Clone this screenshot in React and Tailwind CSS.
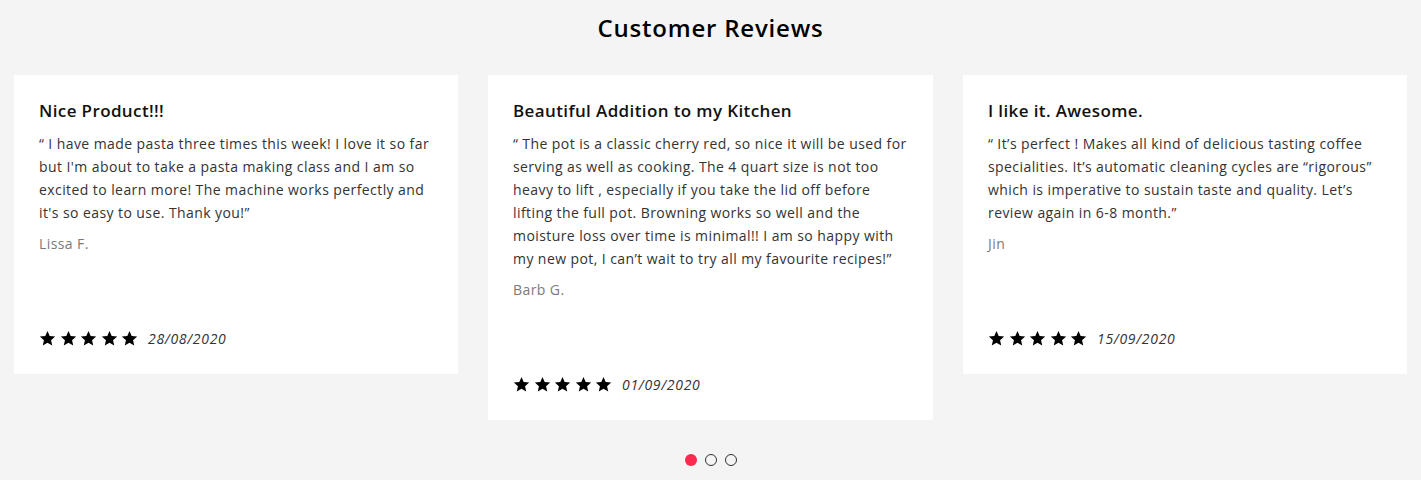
import React from "react";

const reviews = [
  {
    title: "Nice Product!!!",
    lines: [
      "\u201C I have made pasta three times this week! I love it so far",
      "but I'm about to take a pasta making class and I am so",
      "excited to learn more! The machine works perfectly and",
      "it's so easy to use. Thank you!\u201D",
    ],
    author: "Lissa F.",
    date: "28/08/2020",
    w: "w-[444px]",
  },
  {
    title: "Beautiful Addition to my Kitchen",
    lines: [
      "\u201C The pot is a classic cherry red, so nice it will be used for",
      "serving as well as cooking. The 4 quart size is not too",
      "heavy to lift , especially if you take the lid off before",
      "lifting the full pot. Browning works so well and the",
      "moisture loss over time is minimal!! I am so happy with",
      "my new pot, I can\u2019t wait to try all my favourite recipes!\u201D",
    ],
    author: "Barb G.",
    date: "01/09/2020",
    w: "w-[445px]",
  },
  {
    title: "I like it. Awesome.",
    lines: [
      "\u201C It\u2019s perfect ! Makes all kind of delicious tasting coffee",
      "specialities. It\u2019s automatic cleaning cycles are \u201Crigorous\u201D",
      "which is imperative to sustain taste and quality. Let\u2019s",
      "review again in 6-8 month.\u201D",
    ],
    author: "Jin",
    date: "15/09/2020",
    w: "w-[444px]",
  },
];

function Star() {
  return (
    <svg width="17" height="17" viewBox="0 0 24 24" className="block">
      <polygon
        points="12,1.5 15.1,8.6 22.8,9.3 17,14.4 18.7,22 12,18 5.3,22 7,14.4 1.2,9.3 8.9,8.6"
        fill="#000"
      />
    </svg>
  );
}

function Card({ r }) {
  return (
    <div className={`bg-white ${r.w} shrink-0 p-[25px] pb-[24px]`}>
      <h3 className="text-[17px] leading-[22px] font-semibold tracking-[0.38px] text-[#111]">{r.title}</h3>
      <div className="mt-[9.5px] text-[14px] leading-[23px] tracking-[0.42px] text-[#333]">
        {r.lines.map((l, i) => (
          <div key={i} className="whitespace-nowrap">{l}</div>
        ))}
      </div>
      <div className="mt-[8px] text-[14px] leading-[23px] tracking-[0.42px] text-[#7a7a7a]">{r.author}</div>
      <div className="mt-[72px] h-[23px] flex items-center">
        <div className="flex gap-[3.5px]">
          <Star /><Star /><Star /><Star /><Star />
        </div>
        <span className="ml-[10px] text-[14px] italic tracking-[0.7px] text-[#333]">{r.date}</span>
      </div>
    </div>
  );
}

export default function App() {
  return (
    <div
      className="bg-[#f4f4f4] w-full h-[480px] px-[14px] pt-[12px]"
      style={{ fontFamily: "'Open Sans', 'Noto Sans', sans-serif" }}
    >
      <h2 className="text-center text-[24px] leading-[32px] font-semibold tracking-[0.8px] text-black">Customer Reviews</h2>
      <div className="mt-[31px] flex gap-[30px] items-start">
        {reviews.map((r, i) => (
          <Card key={i} r={r} />
        ))}
      </div>
      <div className="mt-[34px] flex justify-center gap-[8px]">
        <span className="w-[12px] h-[12px] rounded-full bg-[#fb2a4e]"></span>
        <span className="w-[12px] h-[12px] rounded-full border border-[#333]"></span>
        <span className="w-[12px] h-[12px] rounded-full border border-[#333]"></span>
      </div>
    </div>
  );
}
